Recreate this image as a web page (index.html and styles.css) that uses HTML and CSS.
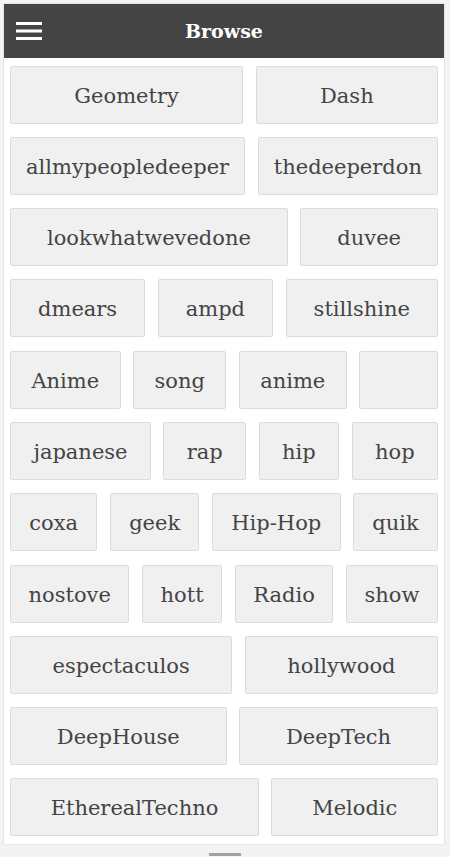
FILE: index.html
```html
<!DOCTYPE html>
<html>
<head>
<meta charset="utf-8">
<link rel="stylesheet" href="styles.css">
</head>
<body>
<div class="app">
  <header class="bar">
    <svg class="menu" width="26" height="18" viewBox="0 0 26 18"><rect x="0" y="0" width="26" height="3" fill="#fff"/><rect x="0" y="7.5" width="26" height="3" fill="#fff"/><rect x="0" y="15" width="26" height="3" fill="#fff"/></svg>
    <h1 class="title">Browse</h1>
  </header>
  <main class="tags">
    <div class="row"><a class="tag">Geometry</a><a class="tag">Dash</a></div>
    <div class="row"><a class="tag">allmypeopledeeper</a><a class="tag">thedeeperdon</a></div>
    <div class="row"><a class="tag">lookwhatwevedone</a><a class="tag">duvee</a></div>
    <div class="row"><a class="tag">dmears</a><a class="tag">ampd</a><a class="tag">stillshine</a></div>
    <div class="row"><a class="tag">Anime</a><a class="tag">song</a><a class="tag">anime</a><a class="tag"><span class="blank"></span></a></div>
    <div class="row"><a class="tag">japanese</a><a class="tag">rap</a><a class="tag">hip</a><a class="tag">hop</a></div>
    <div class="row"><a class="tag">coxa</a><a class="tag">geek</a><a class="tag">Hip-Hop</a><a class="tag">quik</a></div>
    <div class="row"><a class="tag">nostove</a><a class="tag">hott</a><a class="tag">Radio</a><a class="tag">show</a></div>
    <div class="row"><a class="tag">espectaculos</a><a class="tag">hollywood</a></div>
    <div class="row"><a class="tag">DeepHouse</a><a class="tag">DeepTech</a></div>
    <div class="row"><a class="tag">EtherealTechno</a><a class="tag">Melodic</a></div>
  </main>
</div>
<div class="handle"></div>
</body>
</html>
```
FILE: styles.css
```css
html, body {
  margin: 0;
  padding: 0;
}
body {
  background: #f3f3f3;
  font-family: "DejaVu Serif", "Liberation Serif", serif;
  width: 450px;
  height: 857px;
  overflow: hidden;
}
.app {
  margin: 3px 5px 0 3px;
  background: #fff;
  border: 1px solid #e4e4e4;
  border-bottom-color: #e9e9e9;
}
.bar {
  height: 54px;
  background: #444;
  display: flex;
  align-items: center;
  position: relative;
}
.menu {
  margin-left: 12px;
  display: block;
}
.title {
  position: absolute;
  left: 0;
  right: 0;
  margin: 0;
  text-align: center;
  color: #fff;
  font-size: 19px;
  font-weight: bold;
  pointer-events: none;
}
.tags {
  display: flex;
  flex-direction: column;
  gap: 13.3px;
  padding: 7.5px 6px 8px;
}
.row {
  display: flex;
  gap: 12.5px;
}
.tag {
  flex: 1 1 auto;
  height: 58px;
  box-sizing: border-box;
  display: flex;
  align-items: center;
  justify-content: center;
  background: #f0f0f0;
  border: 1px solid #dcdcdc;
  border-radius: 2px;
  color: #444;
  font-size: 21px;
  padding: 2px 14px 0;
  white-space: nowrap;
}
.blank {
  display: inline-block;
  width: 36px;
}
.handle {
  width: 32px;
  height: 3px;
  background: #a0a0a0;
  margin: 8px auto 0;
}
```
